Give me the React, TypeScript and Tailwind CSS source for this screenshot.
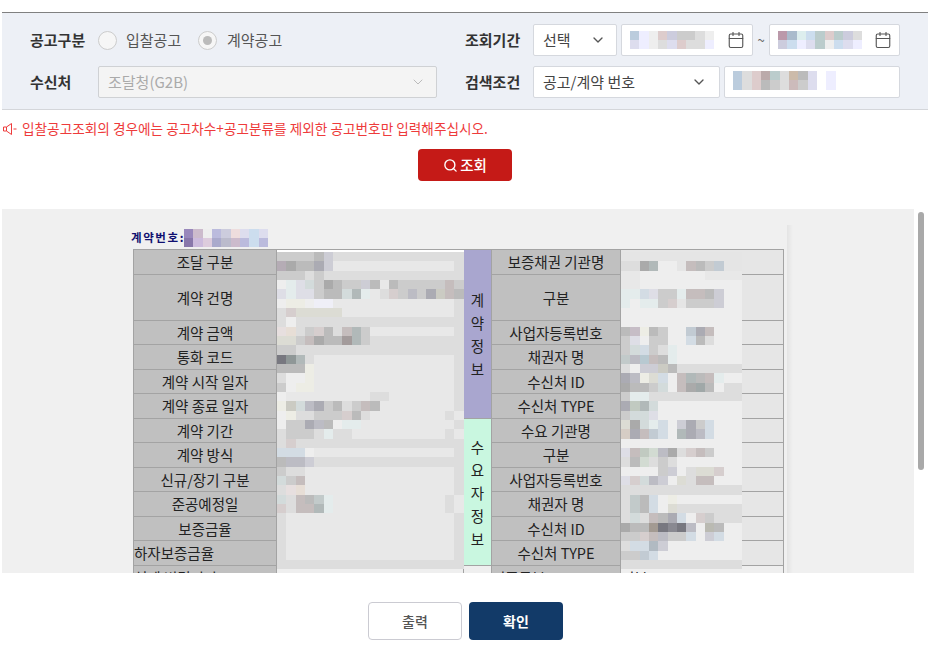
import { Calendar, ChevronDown, Search } from "lucide-react";

const font = "font-['Noto_Sans_CJK_KR','Noto_Sans',sans-serif]";

// blurred-out values in the screenshot, one string per band of blocks
const leftBlur = [
  "ccc ccc ccc ccc bbb ccd ddd ddd ddd ddd ddd ddd ddd ddd ddd ddd ddd ddd ddd ddd",
  "bab aaa bbb bbb aab ccd . . . . . . . . . . . . . ddd",
  "ccc ccc ccc ddd ccc ddd ddd ddd ddd ddd ddd ddd ddd ddd ddd ddd ddd ddd ddd ddd",
  "eee dee dde cdd ccc aaa bbb ccc ccc ccd bbb . bbb ccc ccc ccc ccc ccc cbb ccc",
  "dde dee dde dde ccc bbb bbb cdd abb dee . ddd dcc ccc bbc ccc aab ccb cbb bbb",
  "eee eed eed eee eef eef . . . . . . . . . . . . . ddd",
  "ddd dcc ddc ddc ddc ddc ddc . . . . . . . . . . . . ddd",
  "ddd eee ddd ddd ddd ddd ddd ddd ddd ddd ddd ddd ddd ddd ddd ddd ddd ddd ddd ddd",
  "edd edc ddd ccc dcc bbb ddd cbb abb ccc . . . . . . . . . ddd",
  "ddc ddc ccc cbb aaa bbb bbb a99 abb ccc ddd ddd ddd ddd ddd ddd ddd ddd ddd ddd",
  "ccc ccc ddd ddd ddd ddd ddd ddd ddd ddd ddd ddd ddd ddd ddd ddd ddd ddd ddd ddd",
  "778 899 abb ddd . . . . . . . . . . . . . . . ddd",
  "bbb bbb bbb eed . . . . . . . . . . . . . . . ddd",
  "ddd eee eee eed . . . . . . . . . . . . . . . ddd",
  "ccc eee eed eed . . . . . . . . . . . . . . . ddd",
  "eee . . . . . . . . . ddd ddd . . . . . . . ddd",
  "eed ccb cdd bbc aab ccc bbb ddd ccc cbb bbb . . . . . . . . ddd",
  "eee eed ddd ddd ccc ccc ccc dcc bbb ddd . . . . . . . . ddd",
  "eee ccc ccc aab bbc bbb eee dee dee . . . . . . . . . . ddd",
  "ddd ccc ccc ccc ddd dee ddd ddd . . . . . . . . . . ddd",
  "ddd dcc ddd ddd ddd ddd ddd ddd ddd ddd ddd ddd ddd ddd ddd ddd ddd ddd ddd ddd",
  "cde cde cde eee . . . . . . . . . . . . . . . ddd",
  "bbb bbc bbc ccd ddd ddd ddd ddd ddd ddd ddd ddd ddd ddd ddd ddd ddd ddd ddd ddd",
  "ccc ddd ddd . . . . . . . . . . . . . . . . ddd",
  "cdd ccc cbb . . . . . . . . . . . . . . . . ddd",
  "ddd edd edc . . . . . . . . . . . . . . . . ddd",
  "cdd ddd cbb bbb bcc dee . . . . . . . . . . . . ddd",
  "dcc ddd cbb cbb abb dee . . . . . . . . . . . . ddd",
  "ddd . . . . . . . . . . . . . . . . . . ddd",
  "ddd . . . . . . . . . . . . . . . . . . ddd",
  "ddd . . . . . . . . . . . . . . . . . . ddd",
  "ddd . . . . . . . . . . . . . . . . . . ddd",
  "ddd . . . . . . . . . . . . . . . . . . ddd",
  "ddd ddd ddd ddd ddd ddd ddd ddd ddd ddd ddd ddd ddd ddd ddd ddd ddd ddd ddd ddd",
];

const rightBlur = [
  "e5e5e5 e5e5e5 e5e5e5 e5e5e5 e5e5e5 e5e5e5 e5e5e5 e5e5e5 e5e5e5 e5e5e5 e5e5e5 e5e5e5 e5e5e5",
  "ddd ddd aaa abb eee eee e5e5e5 cbb bbb ccc bcd e5e5e5 e5e5e5",
  "e8e8e8 e8e8e8 eee eee eee eee eee eee eee e8e8e8 e8e8e8 e8e8e8 e8e8e8",
  "e8e8e8 e8e8e8 eee eee eee eee eee eee eee eee eee eee eee",
  "dee dee cde dde ccc ccc dee cbb cbb bbb ccd eee eee",
  "dee eee dee dee ccc dcc e5e5e5 ccc ccc ccc ccd eee eee",
  "eee eee eee eee eee eee eee eee eee eee eee eee eee",
  "eee eee eee eee eee eee eee eee eee eee eee eee eee",
  "bbb cbc eed bbb ccc eee eee bcd aab cbb eee eee eee",
  "ccc dde eee ccc ccc eee eee cde bbb ddd eee eee eee",
  "ccc cdd cde ccc ddd dee eee eee eee eee eee eee eee",
  "bcc bbc acd cbb bbb dee eee eee eee eee eee eee eee",
  "ddd eee ccd ccd ccb bbb ddd ddd ddd ddd ddd ddd ddd",
  "aab bbc eed ddc cde eee cbb abb bbb cbb dee eee eee",
  "aaa bbb bbb ccc cdd eee cbb aaa 9aa bbb eee ddd ddd",
  "ccc dee dee ddd ddd ddd ddd ddd ddd ddd ddd ddd ddd",
  "aab bcb abb cdd eee eee eee eee eee eee eee eee eee",
  "ccc cdd cdd dde eee eee eee eee eee eee eee eee eee",
  "ddc aaa cdd dee cde eee ccd aab ccc cde eee eee eee",
  "dcb aab cbb bcd cde eee abb aab bbc cde eee eee eee",
  "eee eee eee eee eee eee eee eee eee eee eee eee eee",
  "dde cbb bcb cdc bbc aaa ddd dcc cbb ccc eee eee eee",
  "ddd bbb cdc ddd ccc ddd eee eee eee eee eee eee eee",
  "eee eee eee eee ccc ccd eee ddd ddc ddc dcc eee eee",
  "dde dcc cdd bbc ccd eee ddc ddd cbb cbb eee eee eee",
  "ddd ddd ddd ddd ddd ddd ddd ddd ddd ddd ddd ddd ddd",
  "ddd bcc bbb cde eee eed eee eee eee eee eee eee eee",
  "ddd bcc bbb cde eee ddc ddd ddd ddd ddd ddd ddd ddd",
  "ddd cdd ddd cbb bbb aab cde eee dcc ccc ddd ddd ddd",
  "aaa bbb bbb a98 778 889 778 bbc eee bba bbb eee eee",
  "ccc ccc dcc cbb bbc ccc ccc cde eee ccd cde eee eee",
  "ddd cde cde abc ccd eee eee eee eee eee eee eee eee",
  "ccc ccc bcd cde eee eee eee eee eee eee eee eee eee",
  "ddd ddd ddd ddd ddd ddd ddd ddd ddd ddd ddd ddd ddd",
];

const date1Blur = [
  "bcd eef eee dcc ccd ccc ccc ddd eee",
  "dde eef eee ddd dde dcc ddd ddd eef",
];
const date2Blur = [
  "b9a abc dee cde bcc dcc bcc ccd ddd",
  "ccd cde eef dde bcc eee cde dde eef",
];
const keywordBlur = [
  "bcd ddd dcc baa bcc ddd cba bbb dde . eef",
  "bcd ddd dcc bbb ccc ddd cbb ccc dde . eef",
];
const contractBlur = [
  "98b cbc eee bbd ccd edd dde cde dde",
  "87a cbd dcd aac bbc cbc bbd cde bbd",
];

const rows = [
  { left: "조달 구분", right: "보증채권 기관명", h: "h-[25px]" },
  { left: "계약 건명", right: "구분", h: "h-[46px]" },
  { left: "계약 금액", right: "사업자등록번호", h: "h-[24px]" },
  { left: "통화 코드", right: "채권자 명", h: "h-[25px]" },
  { left: "계약 시작 일자", right: "수신처 ID", h: "h-[24px]" },
  { left: "계약 종료 일자", right: "수신처 TYPE", h: "h-[25px]" },
  { left: "계약 기간", right: "수요 기관명", h: "h-[24px]" },
  { left: "계약 방식", right: "구분", h: "h-[25px]" },
  { left: "신규/장기 구분", right: "사업자등록번호", h: "h-[24px]" },
  { left: "준공예정일", right: "채권자 명", h: "h-[25px]" },
  { left: "보증금율", right: "수신처 ID", h: "h-[24px]" },
  { left: "하자보증금율", right: "수신처 TYPE", h: "h-[25px]", leftAlign: true },
];

function Blur({ bands, className }: { bands: string[]; className?: string }) {
  return (
    <div className={`blur-[0.7px] ${className ?? ""}`}>
      {bands.map((band, i) => (
        <div key={i} className="flex h-[9.33px]">
          {band.split(" ").map((c, j) => (
            <div
              key={j}
              className="w-[9.33px] h-full shrink-0"
              style={{ backgroundColor: c === "." ? "transparent" : `#${c}` }}
            />
          ))}
        </div>
      ))}
    </div>
  );
}

function DateField({ bands, width }: { bands: string[]; width: string }) {
  return (
    <div className={`${width} h-[32px] bg-white border border-[#d5d8de] rounded-[2px] flex items-center justify-between pl-[8px] pr-[7px]`}>
      <Blur bands={bands} />
      <Calendar size={18} strokeWidth={1.5} className="text-[#555]" />
    </div>
  );
}

export default function App() {
  return (
    <div className={`w-[936px] h-[646px] bg-white overflow-hidden pt-[12px] ${font}`}>
      <div className="ml-[2px] w-[926px] h-[98px] bg-[#edf0f6] border-t border-t-[#808080] border-b border-b-[#d4d6da] pl-[28px] pt-[11px] flex flex-col gap-[10px]">
        <div className="flex items-center h-[32px]">
          <div className="w-[435px] flex items-center text-[15px]">
            <span className="w-[68px] font-bold text-[#333]">공고구분</span>
            <span className="w-[19px] h-[19px] rounded-full border border-[#ccc] bg-[#f6f6f6]" />
            <span className="ml-[9px] w-[72px] text-[#555]">입찰공고</span>
            <span className="w-[19px] h-[19px] rounded-full border border-[#ccc] bg-[#f6f6f6] flex items-center justify-center">
              <span className="w-[9px] h-[9px] rounded-full bg-[#bbb]" />
            </span>
            <span className="ml-[10px] text-[#555]">계약공고</span>
          </div>
          <span className="w-[68px] text-[15px] font-bold text-[#333]">조회기간</span>
          <div className="w-[84px] h-[32px] bg-white border border-[#d5d8de] rounded-[2px] flex items-center justify-between pl-[9px] pr-[10px] text-[15px] text-[#444]">
            선택
            <ChevronDown size={16} strokeWidth={2} className="text-[#555]" />
          </div>
          <div className="ml-[4px]">
            <DateField bands={date1Blur} width="w-[132px]" />
          </div>
          <span className="w-[16px] text-center text-[13px] text-[#666]">~</span>
          <DateField bands={date2Blur} width="w-[131px]" />
        </div>
        <div className="flex items-center h-[32px]">
          <div className="w-[435px] flex items-center text-[15px]">
            <span className="w-[68px] font-bold text-[#333]">수신처</span>
            <div className="w-[339px] h-[32px] bg-[#f4f4f4] border border-[#cfd1d4] rounded-[2px] flex items-center justify-between pl-[9px] pr-[10px] text-[#aaa]">
              조달청(G2B)
              <ChevronDown size={16} strokeWidth={1.5} className="text-[#bbb]" />
            </div>
          </div>
          <span className="w-[68px] text-[15px] font-bold text-[#333]">검색조건</span>
          <div className="w-[187px] h-[32px] bg-white border border-[#d5d8de] rounded-[2px] flex items-center justify-between pl-[9px] pr-[12px] text-[15px] text-[#444]">
            공고/계약 번호
            <ChevronDown size={16} strokeWidth={2} className="text-[#555]" />
          </div>
          <div className="ml-[4px] w-[176px] h-[32px] bg-white border border-[#d5d8de] rounded-[2px] pl-[8px] pt-[4px]">
            <Blur bands={keywordBlur} />
          </div>
        </div>
      </div>

      <div className="flex items-center h-[38px] pb-[1px] pl-[3px] text-[13.65px] text-[#ee3b3b]">
        <svg width="14" height="14" viewBox="0 0 14 14" fill="none" stroke="currentColor" strokeWidth="1" className="mr-[5px] shrink-0">
          <path d="M0.5 5h3v4h-3z" />
          <path d="M3.5 5l5-3.5v11l-5-3.5" />
          <path d="M10.5 7h3" />
        </svg>
        입찰공고조회의 경우에는 공고차수+공고분류를 제외한 공고번호만 입력해주십시오.
      </div>

      <div className="mt-[1px] flex pl-[418px]">
        <button className="w-[94px] h-[32px] bg-[#c51a17] rounded-[4px] flex items-center justify-center gap-[2px] text-white text-[14.5px] font-medium">
          <Search size={15} strokeWidth={2.2} />
          조회
        </button>
      </div>

      <div className="mt-[28px] flex h-[364px]">
        <div className="relative ml-[2px] w-[912px] h-full bg-[#f0f0f0] overflow-hidden">
          <div className="absolute left-[785px] top-[16px] bottom-0 w-[6px] bg-gradient-to-r from-[#e4e4e4] to-[#f0f0f0]" />
          <div className="flex items-center h-[40px] pt-[18px] pl-[129px]">
            <span className="text-[11.5px] font-bold text-[#101070] tracking-[1.6px]">계약번호:</span>
            <Blur bands={contractBlur} className="ml-[-1px]" />
          </div>
          <table className="ml-[131px] w-[650px] table-fixed border-collapse text-[14.5px] text-[#222] bg-[#e6e6e6]">
            <colgroup>
              <col className="w-[143px]" />
              <col className="w-[187px]" />
              <col className="w-[28px]" />
              <col className="w-[129px]" />
              <col className="w-[163px]" />
            </colgroup>
            <tbody>
              {rows.map((row, i) => (
                <tr key={i} className={row.h}>
                  <td className={`border border-[#a3a3a3] bg-[#c0c0c0] p-0 ${row.leftAlign ? "text-left" : "text-center"}`}>{row.left}</td>
                  <td className="border border-[#a3a3a3] p-0" />
                  {i === 0 && (
                    <td rowSpan={6} className="border border-[#a3a3a3] bg-[#a9a6cf] p-0 text-center leading-[23px]">
                      계<br />약<br />정<br />보
                    </td>
                  )}
                  {i === 6 && (
                    <td rowSpan={6} className="border border-[#a3a3a3] bg-[#c9f7e0] p-0 text-center leading-[23px]">
                      수<br />요<br />자<br />정<br />보
                    </td>
                  )}
                  <td className="border border-[#a3a3a3] bg-[#c0c0c0] p-0 text-center">{row.right}</td>
                  <td className="border border-[#a3a3a3] p-0" />
                </tr>
              ))}
              <tr className="h-[25px] bg-[#efefef]">
                <td className="border border-[#a3a3a3] bg-[#c0c0c0] p-0 text-left">설계 변경기간</td>
                <td className="border border-[#a3a3a3] p-0" />
                <td className="border border-[#a3a3a3] p-0" />
                <td className="border border-[#a3a3a3] bg-[#c0c0c0] p-0 text-left">기준구분</td>
                <td className="border border-[#a3a3a3] p-0 text-left">전부</td>
              </tr>
            </tbody>
          </table>
          <div className="absolute left-[275px] top-[41px] w-[187px] h-[2px] bg-white" />
          <Blur bands={leftBlur} className="absolute left-[275px] top-[43px] bg-[#e8e8e8] saturate-50" />
          <Blur bands={rightBlur} className="absolute left-[619px] top-[43px] saturate-50" />
        </div>
        <div className="ml-[4px] w-[6px] pt-[3px]">
          <div className="w-[6px] h-[258px] rounded-full bg-[#a9a9a9]" />
        </div>
      </div>

      <div className="mt-[29px] flex gap-[7px] pl-[368px] text-[14px]">
        <button className="w-[94px] h-[38px] bg-white border border-[#cbcbd2] rounded-[4px] text-[#555] font-medium">출력</button>
        <button className="w-[94px] h-[38px] bg-[#123a68] rounded-[4px] text-white font-bold">확인</button>
      </div>
    </div>
  );
}
